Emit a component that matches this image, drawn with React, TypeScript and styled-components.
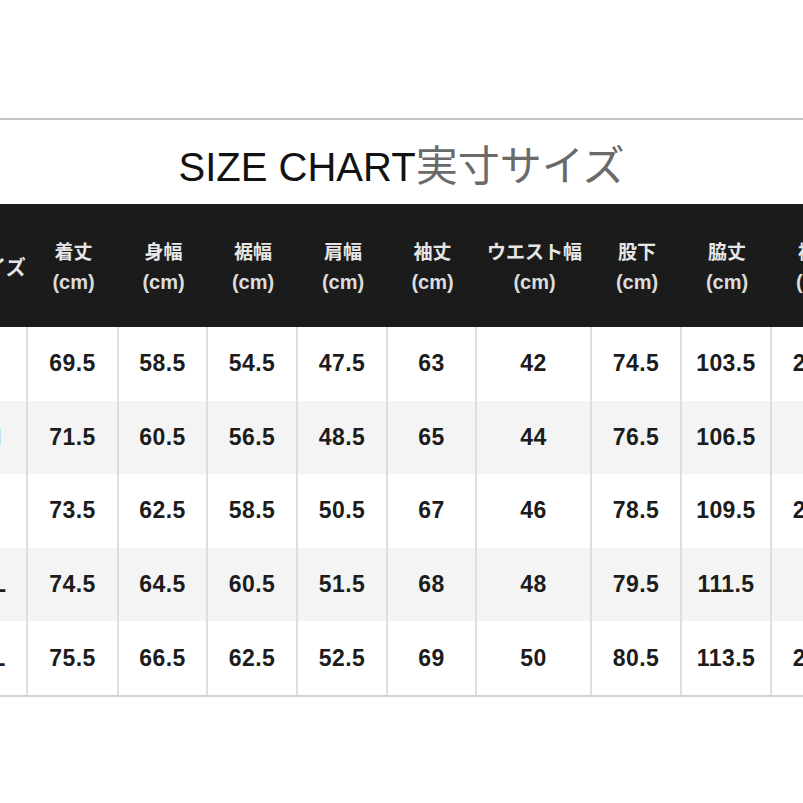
import styled, { createGlobalStyle } from "styled-components";

const GlobalStyle = createGlobalStyle`
  html, body {
    margin: 0;
    padding: 0;
    background: #fff;
  }
  body {
    font-family: "Liberation Sans", Arial, "Noto Sans CJK JP", sans-serif;
  }
`;

const Page = styled.div`
  width: 803px;
  height: 803px;
  overflow: hidden;
  display: flex;
  flex-direction: column;
  padding-top: 118px;
  box-sizing: border-box;
  background: #fff;
`;

const TopRule = styled.div`
  height: 2px;
  background: #c4c4c4;
  flex: none;
`;

const TitleBar = styled.div`
  height: 84px;
  display: flex;
  align-items: center;
  justify-content: center;
  padding-top: 4px;
  box-sizing: border-box;
  flex: none;
`;

const Title = styled.h1`
  margin: 0;
  font-weight: 400;
  font-size: 40px;
  color: #121212;
  white-space: nowrap;
  line-height: 1;
  font-family: "Liberation Sans", Arial, "Noto Sans CJK JP", sans-serif;
`;

const TitleJa = styled.span`
  font-size: 42px;
  color: #6a6a6a;
  font-family: "Noto Sans CJK JP", sans-serif;
`;

// first column starts off-screen, like the cropped photo
const Grid = styled.div`
  display: grid;
  grid-template-columns: 70px 91px 89px 90px 90px 89px 115px 90px 90px 90px;
  grid-template-rows: 123px repeat(5, 73.6px);
  margin-left: -42px;
  width: max-content;
  border-bottom: 2px solid #d2d2d2;
`;

const HeadCell = styled.div`
  background: #1b1b1b;
  color: #e6e6e6;
  display: flex;
  flex-direction: column;
  align-items: center;
  justify-content: center;
  gap: 9px;
  padding-top: 2px;
  box-sizing: border-box;
`;

const HeadLabel = styled.span`
  font-family: "Noto Sans CJK JP", sans-serif;
  font-weight: 700;
  font-size: 19px;
  line-height: 22px;
  white-space: nowrap;
`;

const SizeLabel = styled(HeadLabel)`
  font-size: 20px;
  margin-left: 6px;
`;

const HeadUnit = styled.span`
  font-family: "Liberation Sans", Arial, sans-serif;
  font-weight: 700;
  font-size: 20px;
  line-height: 22px;
  color: #dcdcdc;
`;

const Cell = styled.div<{ $shade: boolean }>`
  background: ${(p) => (p.$shade ? "#f4f4f4" : "#fff")};
  border-right: 2px solid #dedede;
  box-sizing: border-box;
  display: flex;
  align-items: center;
  justify-content: center;
  font-family: "Liberation Sans", Arial, sans-serif;
  font-weight: 700;
  font-size: 23px;
  letter-spacing: 0.4px;
  color: #1c1c1c;
`;

const headers = ["着丈", "身幅", "裾幅", "肩幅", "袖丈", "ウエスト幅", "股下", "脇丈", "裄丈"];

const rows = [
  ["S", "69.5", "58.5", "54.5", "47.5", "63", "42", "74.5", "103.5", "21.5"],
  ["M", "71.5", "60.5", "56.5", "48.5", "65", "44", "76.5", "106.5", "22"],
  ["L", "73.5", "62.5", "58.5", "50.5", "67", "46", "78.5", "109.5", "23.5"],
  ["LL", "74.5", "64.5", "60.5", "51.5", "68", "48", "79.5", "111.5", "24"],
  ["3L", "75.5", "66.5", "62.5", "52.5", "69", "50", "80.5", "113.5", "25.5"],
];

const App = () => {
  return (
    <Page>
      <GlobalStyle />
      <TopRule />
      <TitleBar>
        <Title>
          SIZE CHART<TitleJa>実寸サイズ</TitleJa>
        </Title>
      </TitleBar>
      <Grid>
        <HeadCell>
          <SizeLabel>サイズ</SizeLabel>
        </HeadCell>
        {headers.map((h) => (
          <HeadCell key={h}>
            <HeadLabel>{h}</HeadLabel>
            <HeadUnit>(cm)</HeadUnit>
          </HeadCell>
        ))}
        {rows.map((row, r) =>
          row.map((v, c) => (
            <Cell key={`${r}-${c}`} $shade={r % 2 === 1}>
              {v}
            </Cell>
          ))
        )}
      </Grid>
    </Page>
  );
};

export default App;
